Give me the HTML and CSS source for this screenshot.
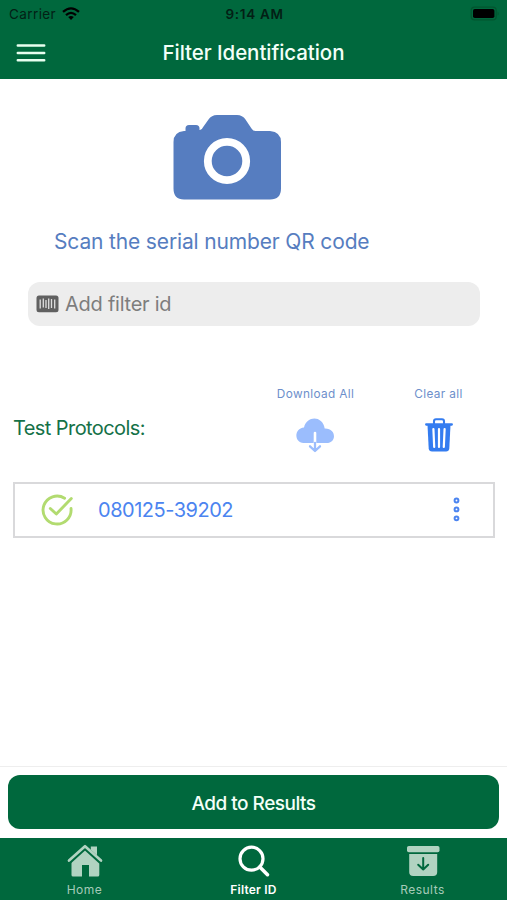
FILE: index.html
```html
<!DOCTYPE html>
<html lang="en">
<head>
<meta charset="utf-8">
<meta name="viewport" content="width=device-width, initial-scale=1">
<title>Filter Identification</title>
<link rel="stylesheet" href="styles.css">
</head>
<body>
<div class="app">
  <header class="header">
    <div class="status">
      <div class="carrier">
        <span class="carrier-name">Carrier</span>
        <svg class="wifi" width="18" height="13" viewBox="0 0 18 13" fill="none" stroke="#000" stroke-width="2.3"><path d="M1 4.9Q9-2.2 17 4.9"/><path d="M4 8.1Q9 3.7 14 8.1"/><path d="M6.2 10.1Q9 7.8 11.8 10.1L9 13Z" fill="#000" stroke="none"/></svg>
      </div>
      <span class="time">9:14 AM</span>
      <svg class="battery" width="30" height="15" viewBox="0 0 30 15"><rect x="1.2" y="1.2" width="25" height="12.6" rx="3.4" fill="none" stroke="#02552f" stroke-width="1.2"/><rect x="3" y="3" width="21.4" height="9" rx="1.8"/><path d="M27.6 5.2q2 2.3 0 4.6z" fill="#02552f"/></svg>
    </div>
    <div class="navbar">
      <svg class="menu" width="30" height="20" viewBox="0 0 30 20" stroke="#e8fff0" stroke-width="2.5" stroke-linecap="round"><path d="M1.800 2.600H28.200M1.800 9.900H28.200M1.800 17.200H28.200"/></svg>
      <h1 class="title">Filter Identification</h1>
    </div>
  </header>

  <main class="content">
    <div class="scan">
      <svg width="108" height="87" viewBox="0 0 108 87"><path fill="#567dc0" d="M11 17H12.500V14.500Q12.500 11 16 11H23Q26.500 11 26.500 14.500V16Q28.500 16.500 30.500 12.500L35.500 5.500Q38.500 1 44 1H64Q69.500 1 72.500 5.500L78.500 14.500Q80 17 82.500 17H97Q108 18 108 28V74.500Q108 85.500 97 85.500H11Q.500 85.500 .500 74.500V28Q.500 18 11 17Z"/><circle cx="54" cy="47" r="19.200" fill="none" stroke="#fff" stroke-width="7.800"/></svg>
      <span class="scan-label">Scan the serial number QR code</span>
    </div>

    <div class="field">
      <svg width="23" height="18" viewBox="0 0 23 18"><rect x=".5" y=".5" width="22" height="16.800" rx="2.500" fill="#606060"/><path d="M4.200 4.500V13.500M7.300 3.500V12.500M10 5V13M12.700 3.500V14M15.500 4V13M18.700 4.500V13.500" stroke="#dedede" stroke-width="1.300"/></svg>
      <span class="placeholder">Add filter id</span>
    </div>

    <section class="protocols">
      <h2 class="section-title">Test Protocols:</h2>
      <div class="action download">
        <span>Download All</span>
        <svg width="40" height="36" viewBox="0 0 40 36"><path fill="#9bbdfd" d="M8.500 26C-1 25.500-1.200 11.500 9 10.500C12-1.500 27.500-1.500 29.700 11.500C41.500 11 42 26 31.500 26Z"/><path d="M20 16V25.500" stroke="#fff" stroke-width="2.600" stroke-linecap="round"/><path d="M20 26V33.500M15 29.300L20 34L25 29.300" fill="none" stroke="#9bbdfd" stroke-width="2.300" stroke-linecap="round" stroke-linejoin="round"/></svg>
      </div>
      <div class="action clear">
        <span>Clear all</span>
        <svg width="30" height="36" viewBox="0 0 30 36" fill="none" stroke="#347cf0"><path stroke-width="2.100" d="M10 7V4.200Q10 2.200 12 2.200H18Q20 2.200 20 4.200V7"/><path d="M2.200 7.500H27.800" stroke-width="2.300" stroke-linecap="round"/><path fill="#347cf0" stroke="none" d="M3.500 8H26.500L25.300 31.500Q25 34.500 22 34.500H8Q5 34.500 4.700 31.500Z"/><path d="M9.400 12L10.200 30M15 12V30M20.600 12L19.800 30" stroke="#fff" stroke-width="2.200" stroke-linecap="round"/></svg>
      </div>
    </section>

    <div class="card">
      <svg class="check" width="33" height="32" viewBox="0 0 33 32" fill="none" stroke="#b2db70" stroke-width="2.900" stroke-linecap="round"><path d="M23.600 4.200A14 14 0 1 0 30 14.500"/><path d="M9.300 14.500L15.300 20L30.300 4.600" stroke-linejoin="round"/></svg>
      <span class="serial">080125-39202</span>
      <svg class="more" width="8" height="26" viewBox="0 0 8 26" fill="none" stroke="#4b84f0" stroke-width="2"><circle cx="4.500" cy="3.500" r="1.900"/><circle cx="4.500" cy="12.400" r="1.900"/><circle cx="4.500" cy="21.300" r="1.900"/></svg>
    </div>
  </main>

  <div class="footer-action"><button class="add">Add to Results</button></div>

  <nav class="tabs">
    <div class="tab">
      <svg width="36" height="34" viewBox="0 0 36 34"><path d="M23.800 8V2.500H30V13" fill="#b1d3c1"/><path d="M4.500 17L18 4.500L32.300 17V31Q32.300 32.600 30.700 32.600H22V21H15V32.600H6.100Q4.500 32.600 4.500 31Z" fill="#b1d3c1"/><path d="M2 18L18 3.500L34 18" fill="none" stroke="#00683d" stroke-width="4.400"/><path d="M2 16.500L18 2.200L34 16.500" fill="none" stroke="#b1d3c1" stroke-width="2.700" stroke-linecap="round" stroke-linejoin="round"/></svg>
      <span>Home</span>
    </div>
    <div class="tab active">
      <svg width="36" height="34" viewBox="0 0 36 34" fill="none" stroke="#fff" stroke-width="3.200" stroke-linecap="round"><circle cx="15.500" cy="14.700" r="11.500"/><path d="M23.800 23L31.500 30.700" stroke-width="3.600"/></svg>
      <span>Filter ID</span>
    </div>
    <div class="tab">
      <svg width="36" height="34" viewBox="0 0 36 34"><rect x="2" y="2" width="32.500" height="6.200" rx="1.800" fill="#b1d3c1"/><path d="M4.200 10H32.200V28Q32.200 32 28.200 32H8.200Q4.200 32 4.200 28Z" fill="#b1d3c1"/><path d="M18.200 14V25.500M13.200 20.700L18.200 25.500L23.200 20.700" fill="none" stroke="#00683d" stroke-width="2" stroke-linecap="round" stroke-linejoin="round"/></svg>
      <span>Results</span>
    </div>
  </nav>
</div>
</body>
</html>
```
FILE: styles.css
```css
* { box-sizing: border-box; }
body { margin: 0; font-family: Inter, "Liberation Sans", sans-serif; background: #fff; }
svg { display: block; flex: none; }
.app { width: 507px; height: 900px; display: flex; flex-direction: column; overflow: hidden; }

.header { height: 79px; flex: none; background: #00683d; }
.status { height: 27px; display: grid; grid-template-columns: 1fr auto 1fr; align-items: center; padding: 0 7px 0 9px; color: #032015; font-size: 13px; }
.carrier { display: flex; align-items: center; gap: 6px; }
.carrier-name { font-size: 13.5px; letter-spacing: .4px; }
.time { font-size: 13.5px; font-weight: 600; letter-spacing: .7px; }
.battery { justify-self: end; }
.navbar { height: 52px; display: grid; grid-template-columns: 60px 1fr 60px; align-items: center; }
.menu { margin-left: 16px; }
.title { margin: 0; text-align: center; color: #f3fff8; font-size: 20.5px; line-height: 24px; font-weight: 500; letter-spacing: -.06px; }

.content { flex: 1; min-height: 0; padding: 35px 12px 0 13px; }
.scan { display: flex; flex-direction: column; align-items: flex-start; }
.scan svg { margin-left: 160px; }
.scan-label { margin: 28px 0 0 41px; font-size: 21px; line-height: 26px; letter-spacing: -.15px; color: #567dc0; white-space: nowrap; }
.field { height: 44px; margin: 27px 15px 0 15px; padding-left: 8px; display: flex; align-items: center; gap: 6px; border-radius: 12px; background: #ededed; }
.placeholder { font-size: 20px; letter-spacing: -.25px; color: #7d7d7d; }

.protocols { height: 94px; margin-top: 60px; display: grid; grid-template-columns: 241px 123px 1fr; }
.section-title { margin: 30px 0 0; font-size: 20px; line-height: 24px; font-weight: 400; letter-spacing: -.58px; color: #157148; }
.action { display: flex; flex-direction: column; align-items: center; font-size: 11.8px; line-height: 16px; letter-spacing: .35px; color: #6d8fcb; white-space: nowrap; }
.action svg { margin-top: 15px; }
.download svg { margin-right: 1px; }
.clear { width: 123px; }
.card { height: 56px; margin-top: 2px; display: flex; align-items: center; border: 2px solid #d9d9db; padding: 0 33px 0 26px; }
.serial { margin-left: 24px; flex: 1; font-size: 20px; letter-spacing: -.48px; color: #4b84f0; }

.footer-action { flex: none; height: 72px; border-top: 1px solid #eeeeee; padding: 8px 8px 0; }
.add { display: block; width: 491px; height: 54px; border: 0; border-radius: 12px; background: #00683d; color: #f3fff8; font: 500 19px Inter, "Liberation Sans", sans-serif; letter-spacing: -.5px; padding: 2px 0 0; }
.tabs { flex: none; height: 62px; display: grid; grid-template-columns: repeat(3, 1fr); background: #00683d; }
.tab { display: flex; flex-direction: column; align-items: center; padding-top: 6px; color: #a5cbb8; font-size: 12px; line-height: 16px; letter-spacing: .5px; }
.tab span { margin-top: 4px; }
.tab.active { color: #fff; font-weight: 600; letter-spacing: .2px; }
```
